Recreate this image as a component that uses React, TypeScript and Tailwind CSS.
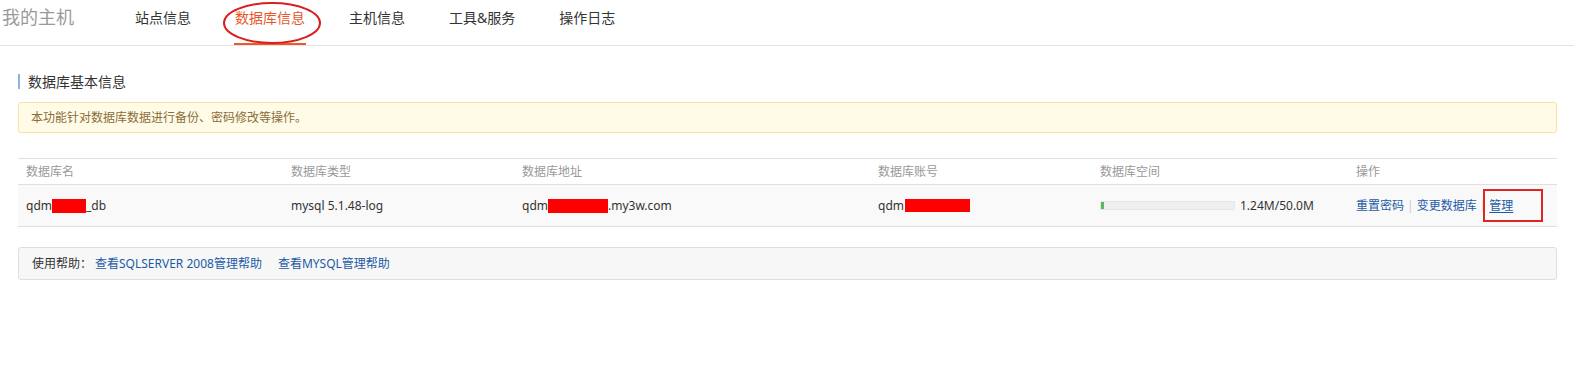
const navItems = ["站点信息", "数据库信息", "主机信息", "工具&服务", "操作日志"];

function Redact({ w }: { w: number }) {
  return <span className="inline-block h-[14px] bg-[#ff0000] align-middle" style={{ width: w }} />;
}

export default function App() {
  return (
    <div className="w-[1574px] h-[383px] bg-white font-['Noto_Sans','Noto_Sans_CJK_SC',sans-serif] text-[12px] text-[#333]">
      <header className="flex items-start h-[46px] border-b border-[#e2e2e2]">
        <div className="ml-[2px] pt-[5px] text-[18px] leading-[24px] text-[#9a9a9a]">我的主机</div>
        <nav className="ml-[60px] flex gap-[42px]">
          {navItems.map((n) => {
            const active = n === "数据库信息";
            return (
              <div
                key={n}
                className={
                  "relative h-[45px] px-[1px] pt-[10px] text-[14px] leading-[16px] border-b-2 " +
                  (active ? "border-[#f0582a] text-[#e8562a]" : "border-transparent text-[#333]")
                }
              >
                {n}
                {active && (
                  <svg className="absolute left-[-11px] top-[2px]" width="98" height="42" viewBox="0 0 98 42">
                    <ellipse cx="49" cy="21" rx="48" ry="20" fill="none" stroke="#d91f1f" strokeWidth="2" />
                  </svg>
                )}
              </div>
            );
          })}
        </nav>
      </header>

      <main className="pl-[18px] pr-[17px]">
        <div className="mt-[28px] border-l-2 border-[#8bb5dd] pl-[8px] text-[14px] leading-[15px] h-[15px] text-[#333]">
          数据库基本信息
        </div>

        <div className="mt-[13px] h-[31px] flex items-center pl-[12px] border border-[#f6e3a3] bg-[#fffbe7] rounded-[3px] text-[#8a6d3b]">
          本功能针对数据库数据进行备份、密码修改等操作。
        </div>

        <div className="mt-[25px]">
          <div className="flex h-[27px] items-center border-t border-b border-[#e0e0e0] text-[#999]">
            <div className="w-[265px] pl-[8px]">数据库名</div>
            <div className="w-[231px] pl-[8px]">数据库类型</div>
            <div className="w-[356px] pl-[8px]">数据库地址</div>
            <div className="w-[222px] pl-[8px]">数据库账号</div>
            <div className="w-[256px] pl-[8px]">数据库空间</div>
            <div className="flex-1 pl-[8px]">操作</div>
          </div>
          <div className="flex h-[42px] items-center border-b border-[#e0e0e0] bg-[#f9f9f9]">
            <div className="w-[265px] pl-[8px] flex items-center">
              <span>qdm</span>
              <Redact w={34} />
              <span>_db</span>
            </div>
            <div className="w-[231px] pl-[8px]">mysql 5.1.48-log</div>
            <div className="w-[356px] pl-[8px] flex items-center">
              <span>qdm</span>
              <Redact w={60} />
              <span>.my3w.com</span>
            </div>
            <div className="w-[222px] pl-[8px] flex items-center">
              <span>qdm</span>
              <span className="ml-[1px] inline-block h-[13px] w-[65px] bg-[#ff0000]" />
            </div>
            <div className="w-[256px] pl-[8px] flex items-center">
              <div className="w-[135px] h-[9px] bg-[#efefef] border border-[#e6e6e6] flex">
                <div className="h-full bg-[#5cb85c]" style={{ width: "2.5%" }} />
              </div>
              <span className="ml-[5px]">1.24M/50.0M</span>
            </div>
            <div className="flex-1 pl-[8px] flex items-center text-[#1d5ba6]">
              <span>重置密码</span>
              <span className="mx-[3px] text-[#ccc]">|</span>
              <span>变更数据库</span>
              <span className="mx-[3px] text-[#ccc]">|</span>
              <span className="relative underline underline-offset-2">
                管理
                <span className="absolute left-[-6px] top-[-8px] w-[60px] h-[33px] border-2 border-[#e02424]" />
              </span>
            </div>
          </div>
        </div>

        <div className="mt-[20px] h-[33px] flex items-center pl-[13px] border border-[#dedede] bg-[#f7f7f7] rounded-[3px]">
          <span>使用帮助：</span>
          <span className="ml-[3px] text-[#1d5ba6]">查看SQLSERVER 2008管理帮助</span>
          <span className="ml-[16px] text-[#1d5ba6]">查看MYSQL管理帮助</span>
        </div>
      </main>
    </div>
  );
}
